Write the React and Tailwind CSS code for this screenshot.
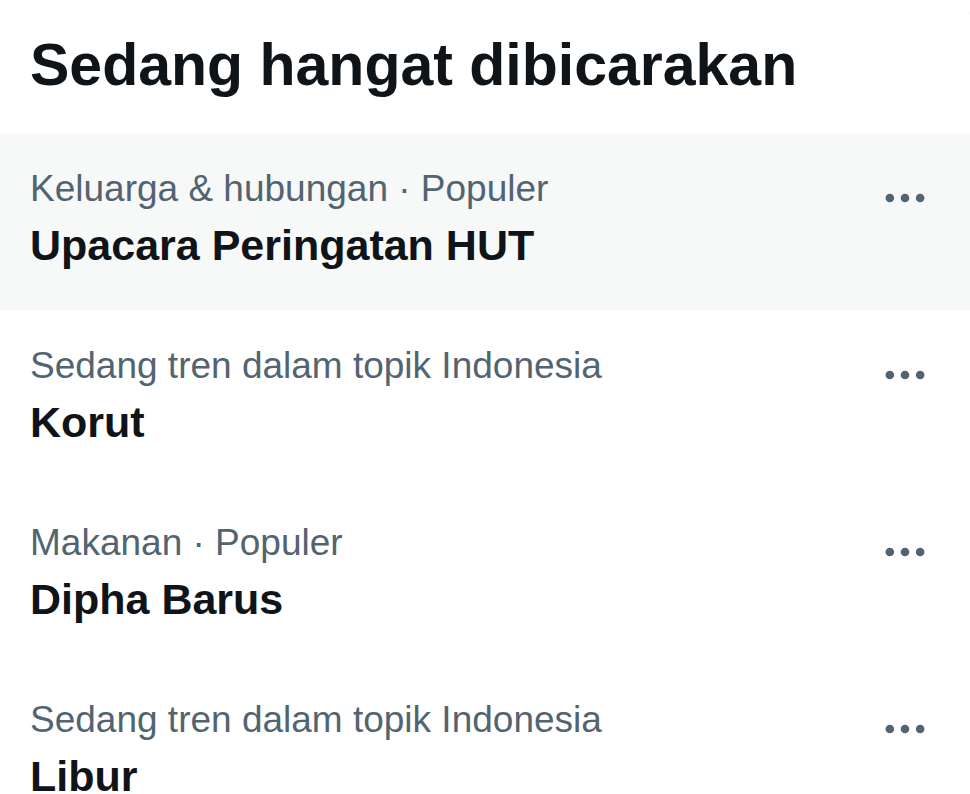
import { Fragment } from 'react'

const trends = [
  { meta: 'Keluarga & hubungan · Populer', name: 'Upacara Peringatan HUT', active: true },
  { meta: 'Sedang tren dalam topik Indonesia', name: 'Korut' },
  { meta: 'Makanan · Populer', name: 'Dipha Barus' },
  { meta: 'Sedang tren dalam topik Indonesia', name: 'Libur' },
]

const MoreIcon = () => (
  <svg viewBox="0 0 24 24" className="w-[52px] h-[52px] fill-[#536471] shrink-0">
    <path d="M3 12c0-1.1.9-2 2-2s2 .9 2 2-.9 2-2 2-2-.9-2-2zm9 2c1.1 0 2-.9 2-2s-.9-2-2-2-2 .9-2 2 .9 2 2 2zm7 0c1.1 0 2-.9 2-2s-.9-2-2-2-2 .9-2 2 .9 2 2 2z" />
  </svg>
)

const TrendRow = ({ meta, name, active }) => (
  <div
    className={`flex items-start justify-between h-[177px] pl-[30px] pr-[53px] ${
      active ? 'bg-[#f7f8f8]' : 'bg-white'
    }`}
  >
    <div className="pt-[34px]">
      <div className="text-[37px] leading-[44px] text-[#536471]">{meta}</div>
      <div className="mt-[8px] text-[43px] leading-[52px] font-bold text-[#0f1419]">{name}</div>
    </div>
    <div className="mt-[39px]">
      <MoreIcon />
    </div>
  </div>
)

export default function App() {
  return (
    <div className="w-[970px] h-[794px] overflow-hidden bg-white font-['Liberation_Sans',Arial,sans-serif]">
      <div className="w-[985px] bg-white border-r border-[#e6ecf0] rounded-tr-[48px] overflow-hidden">
        {/* header */}
        <div className="h-[133px] pt-[29px] pl-[30px]">
          <h2 className="text-[59px] leading-[72px] font-bold text-[#0f1419]">
            Sedang hangat dibicarakan
          </h2>
        </div>
        {trends.map((t, i) => (
          <Fragment key={i}>
            <TrendRow {...t} />
          </Fragment>
        ))}
      </div>
    </div>
  )
}
